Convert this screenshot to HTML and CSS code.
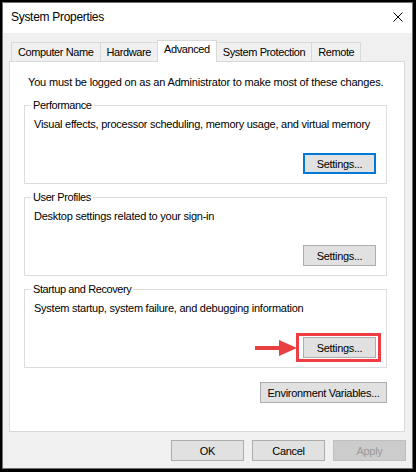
FILE: index.html
```html
<!DOCTYPE html>
<html>
  <head>
    <title>System Properties</title>
    <link rel="stylesheet" href="styles.css">
  </head>
  <body>
    <div class="window">
      <div class="titlebar">
        <span class="title">System Properties</span>
        <svg class="close" width="10" height="10" viewBox="0 0 10 10">
          <path d="M0.5 0.5 L9.5 9.5 M9.5 0.5 L0.5 9.5" stroke="#000" stroke-width="1" fill="none" />
        </svg>
      </div>

      <div class="main">
        <div class="tabs">
          <div class="tab">Computer Name</div>
          <div class="tab">Hardware</div>
          <div class="tab selected">Advanced</div>
          <div class="tab">System Protection</div>
          <div class="tab">Remote</div>
        </div>

        <div class="panel">
          <p class="note">You must be logged on as an Administrator to make most of these changes.</p>

          <fieldset class="group">
            <legend>Performance</legend>
            <p>Visual effects, processor scheduling, memory usage, and virtual memory</p>
            <div class="btn-row">
              <button type="button" class="btn focused">Settings...</button>
            </div>
          </fieldset>

          <fieldset class="group">
            <legend>User Profiles</legend>
            <p>Desktop settings related to your sign-in</p>
            <div class="btn-row">
              <button type="button" class="btn">Settings...</button>
            </div>
          </fieldset>

          <fieldset class="group">
            <legend>Startup and Recovery</legend>
            <p>System startup, system failure, and debugging information</p>
            <div class="btn-row">
              <span class="callout">
                <!-- annotation arrow pointing at the button -->
                <svg class="arrow" width="42" height="16" viewBox="0 0 42 16">
                  <rect x="0" y="6" width="26" height="4" fill="#e8403f" />
                  <polygon points="24,0 42,8 24,16" fill="#e8403f" />
                </svg>
                <button type="button" class="btn">Settings...</button>
              </span>
            </div>
          </fieldset>

          <div class="env-row">
            <button type="button" class="btn wide">Environment Variables...</button>
          </div>
        </div>

        <div class="footer">
          <button type="button" class="btn">OK</button>
          <button type="button" class="btn">Cancel</button>
          <button type="button" class="btn" disabled>Apply</button>
        </div>
      </div>
    </div>
  </body>
</html>
```

FILE: styles.css
```css
body {
  margin: 0;
  font-family: "Segoe UI", "Liberation Sans", Arial, sans-serif;
  font-size: 11px;
  letter-spacing: -0.4px;
  color: #000;
}
.window {
  width: 416px;
  height: 472px;
  box-sizing: border-box;
  border-style: solid;
  border-color: #000;
  border-width: 2px 3px 3px 2px;
  padding: 1px;
  box-shadow: inset 0 0 0 1px #707070;
  background: #f0f0f0;
  display: flex;
  flex-direction: column;
}
.titlebar {
  height: 30px;
  background: #fff;
  display: flex;
  align-items: center;
  justify-content: space-between;
  padding: 0 9px 2px 8px;
  box-sizing: border-box;
}
.title {
  font-size: 12px;
  letter-spacing: -0.3px;
}
.close {
  display: block;
}
.main {
  flex: 1;
  padding: 7px 7px 0 6px;
  display: flex;
  flex-direction: column;
}
.tabs {
  display: flex;
  margin-left: 2px;
  margin-bottom: -1px;
  height: 22px;
}
.tab {
  margin-top: 2px;
  height: 19px;
  box-sizing: border-box;
  padding: 0 6px;
  line-height: 18px;
  border: 1px solid #d9d9d9;
  border-bottom: none;
  background: #f0f0f0;
  margin-left: -1px;
  white-space: nowrap;
}
.tab:first-child {
  margin-left: 0;
}
.tab.selected {
  margin-top: 0;
  height: 22px;
  line-height: 16px;
  background: #fff;
  position: relative;
  z-index: 1;
}
.panel {
  height: 371px;
  box-sizing: border-box;
  background: #fff;
  border: 1px solid #d9d9d9;
  padding: 14px 17px 0 14px;
}
.note {
  margin: 0 0 10px 4px;
  line-height: 13px;
  letter-spacing: -0.18px;
  white-space: nowrap;
}
.group {
  margin: 7px 0 0 0;
  padding: 6px 10px 9px 9px;
  border: 1px solid #dcdcdc;
  min-width: 0;
}
.group legend {
  padding: 0 2px;
  margin-left: -3px;
  line-height: 13px;
}
.group p {
  margin: 0;
  line-height: 13px;
  letter-spacing: -0.25px;
  white-space: nowrap;
}
.btn-row {
  display: flex;
  justify-content: flex-end;
  margin-top: 22px;
}
.btn {
  width: 73px;
  height: 21px;
  padding: 0;
  font-family: inherit;
  font-size: 11px;
  letter-spacing: -0.3px;
  color: #000;
  background: #e1e1e1;
  border: 1px solid #adadad;
  border-radius: 0;
}
.btn.focused {
  border: 2px solid #0078d7;
}
.btn:disabled {
  background: #cccccc;
  border-color: #bfbfbf;
  color: #9a9a9a;
}
.btn.wide {
  width: 127px;
}
.callout {
  position: relative;
  display: inline-block;
}
.callout .btn {
  display: block;
}
.callout::after {
  content: "";
  position: absolute;
  top: -4px;
  bottom: -4px;
  left: -7px;
  right: -5px;
  border: 3px solid #ee3e44;
}
.arrow {
  position: absolute;
  right: 79px;
  top: 3px;
}
.env-row {
  display: flex;
  justify-content: flex-end;
  margin-top: 14px;
}
.footer {
  display: flex;
  justify-content: flex-end;
  gap: 8px;
  padding-top: 8px;
  margin-right: -1px;
}
```
